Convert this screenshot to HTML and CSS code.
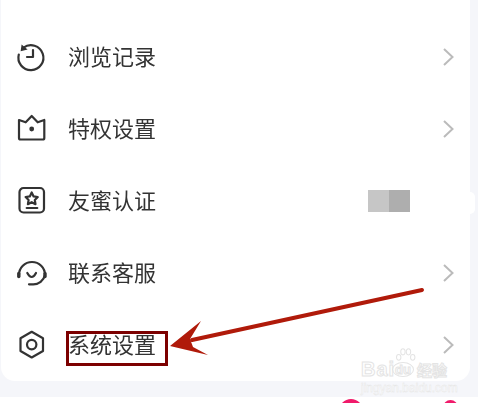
FILE: index.html
```html
<!DOCTYPE html>
<html lang="zh-CN">
<head>
    <meta charset="UTF-8">
    <meta name="viewport" content="width=device-width, initial-scale=1.0">
    <title>系统设置</title>
    <link rel="stylesheet" href="styles.css">
</head>
<body>
    <div class="page">
        <div class="menu-card">
            <div class="menu-row">
                <svg class="row-icon" viewBox="0 0 28 28">
                    <path d="M5.5 4.6A12.5 12.5 0 1 1 .8 11.5"></path>
                    <path class="solid" d="M3.6 1.6L9.6 6.6L2.6 8.2z"></path>
                    <path d="M15 7V14H9"></path>
                </svg>
                <span class="row-label">浏览记录</span>
                <svg class="chevron" viewBox="0 0 11 18"><path d="M1 1L9.5 9L1 17"></path></svg>
            </div>
            <div class="menu-row">
                <svg class="row-icon" viewBox="0 0 28 28">
                    <path d="M1 5L7.7 7.3L13.7 1L19.7 7.3L26.3 5V23A1.5 1.5 0 0 1 24.8 24.5H2.5A1.5 1.5 0 0 1 1 23z"></path>
                    <circle class="solid" cx="13.7" cy="14" r="2.4"></circle>
                </svg>
                <span class="row-label">特权设置</span>
                <svg class="chevron" viewBox="0 0 11 18"><path d="M1 1L9.5 9L1 17"></path></svg>
            </div>
            <div class="menu-row">
                <svg class="row-icon" viewBox="0 0 28 28">
                    <rect x="1.5" y="1" width="24.5" height="24.5" rx="4"></rect>
                    <path d="M13.7 5.5L15.6 9.4L19.8 10L16.8 13L17.5 17.2L13.7 15.2L9.9 17.2L10.6 13L7.6 10L11.8 9.4z"></path>
                    <path d="M8.7 21H19.3"></path>
                </svg>
                <span class="row-label">友蜜认证</span>
                <div class="masked-value">
                    <span class="mask-light"></span>
                    <span class="mask-dark"></span>
                </div>
            </div>
            <div class="menu-row">
                <svg class="row-icon" viewBox="0 0 28 28">
                    <path d="M1 16A13 13 0 0 1 27 16A12 12 0 0 1 15 25.3H11"></path>
                    <path class="thick" d="M.8 14.5V17.5"></path>
                    <path class="thick" d="M27 14.5V17.5"></path>
                    <path d="M9.3 14Q13.7 22 18 14"></path>
                </svg>
                <span class="row-label">联系客服</span>
                <svg class="chevron" viewBox="0 0 11 18"><path d="M1 1L9.5 9L1 17"></path></svg>
            </div>
            <div class="menu-row">
                <svg class="row-icon" viewBox="0 0 28 28">
                    <path d="M13.7 .8L25 7.2V20L13.7 26.5L2.5 20V7.2z"></path>
                    <circle cx="13.7" cy="13.6" r="4.7"></circle>
                </svg>
                <span class="row-label">系统设置</span>
                <svg class="chevron" viewBox="0 0 11 18"><path d="M1 1L9.5 9L1 17"></path></svg>
            </div>
        </div>

        <div class="side-bump"></div>

        <div class="bottom-nav">
            <span class="nav-dot big"></span>
            <span class="nav-dot small"></span>
        </div>

        <!-- red markup drawn on the screenshot -->
        <div class="mark-box"></div>
        <svg class="mark-arrow" width="478" height="403" viewBox="0 0 478 403">
            <path class="shaft" d="M422 290L192 340"></path>
            <path class="head" d="M170 346L201 321L190 339L193 347L208 355z"></path>
        </svg>

        <div class="watermark">
            <svg class="paw" viewBox="0 0 24 20">
                <ellipse cx="4" cy="11" rx="2.6" ry="3.4"></ellipse>
                <ellipse cx="9" cy="4.5" rx="2.6" ry="3.6"></ellipse>
                <ellipse cx="15.5" cy="4.5" rx="2.6" ry="3.6"></ellipse>
                <ellipse cx="20.5" cy="11" rx="2.6" ry="3.4"></ellipse>
            </svg>
            <div class="wm-line">
                <span class="wm-bai">Bai</span>
                <span class="wm-du">du</span>
                <span class="wm-cn">经验</span>
            </div>
            <div class="wm-url">jingyan.baidu.com</div>
        </div>
    </div>
</body>
</html>
```

FILE: styles.css
```css
html, body {
    margin: 0;
    padding: 0;
}

body {
    font-family: "Noto Sans CJK SC", "Noto Sans", sans-serif;
    background-color: #f5f6fa;
    color: #333;
}

.page {
    position: relative;
    width: 478px;
    height: 403px;
    overflow: hidden;
}

.menu-card {
    width: 469px;
    margin-left: 1px;
    padding-top: 21px;
    background-color: #fff;
    border-radius: 0 0 14px 14px;
}

.menu-row {
    display: flex;
    align-items: center;
    height: 72px;
    padding: 0 16px 0 17px;
}

.row-icon {
    width: 28px;
    height: 28px;
    margin-right: 22px;
    flex-shrink: 0;
    overflow: visible;
    fill: none;
    stroke: #333;
    stroke-width: 2.2;
    stroke-linecap: round;
    stroke-linejoin: round;
}

.row-icon .solid {
    fill: #333;
    stroke: none;
}

.row-icon .thick {
    stroke-width: 3.4;
}

.row-label {
    flex: 1;
    margin-bottom: 4px;
    font-size: 22px;
    line-height: 30px;
    filter: blur(0.3px);
}

.chevron {
    width: 11px;
    height: 18px;
    fill: none;
    stroke: #bbb;
    stroke-width: 2;
}

.masked-value {
    display: flex;
    height: 22px;
    margin-right: 44px;
}

.mask-light,
.mask-dark {
    width: 21px;
}

.mask-light {
    background-color: #c6c6c6;
}

.mask-dark {
    background-color: #aeaeae;
}

.side-bump {
    position: absolute;
    left: 470px;
    top: 192px;
    width: 5px;
    height: 22px;
    background-color: #fff;
    border-radius: 0 6px 6px 0;
}

.bottom-nav {
    display: flex;
    align-items: flex-start;
    gap: 80px;
    height: 22px;
    margin-top: 16px;
    padding: 2px 0 0 339px;
    background-color: #fff;
}

.nav-dot {
    flex-shrink: 0;
    border-radius: 50%;
    background-color: #f01a6a;
}

.nav-dot.big {
    width: 24px;
    height: 24px;
}

.nav-dot.small {
    width: 15px;
    height: 15px;
    margin-top: 1px;
}

.mark-box {
    position: absolute;
    left: 66px;
    top: 331px;
    width: 96px;
    height: 29px;
    border: 3px solid #7c0000;
}

.mark-arrow {
    position: absolute;
    left: 0;
    top: 0;
}

.mark-arrow .shaft {
    stroke: #b01a0a;
    stroke-width: 4;
    stroke-linecap: round;
    fill: none;
}

.mark-arrow .head {
    fill: #b01a0a;
}

.watermark {
    position: absolute;
    left: 361px;
    top: 348px;
    width: 90px;
    color: #fff;
    font-family: "Liberation Sans", sans-serif;
    -webkit-text-stroke: 1px #e4e4e4;
}

.paw {
    display: block;
    width: 21px;
    height: 17px;
    margin-left: 34px;
    fill: #fff;
    stroke: #e4e4e4;
    stroke-width: 1.2;
}

.wm-line {
    display: flex;
    align-items: center;
    height: 17px;
    margin-top: -4px;
    line-height: 17px;
}

.wm-bai {
    width: 31px;
    font-size: 20px;
    font-weight: 700;
    letter-spacing: 1px;
}

.wm-du {
    width: 22px;
    height: 15px;
    margin-right: 3px;
    font-size: 13px;
    font-weight: 700;
    line-height: 14px;
    text-align: center;
    border: 1px solid #e4e4e4;
    border-radius: 50%;
    box-sizing: border-box;
}

.wm-cn {
    font-family: "Noto Sans CJK SC", sans-serif;
    font-size: 15px;
    font-weight: 700;
    white-space: nowrap;
}

.wm-url {
    margin-top: 3px;
    font-size: 12px;
    line-height: 14px;
    white-space: nowrap;
    -webkit-text-stroke: 0.4px #e4e4e4;
}
```
